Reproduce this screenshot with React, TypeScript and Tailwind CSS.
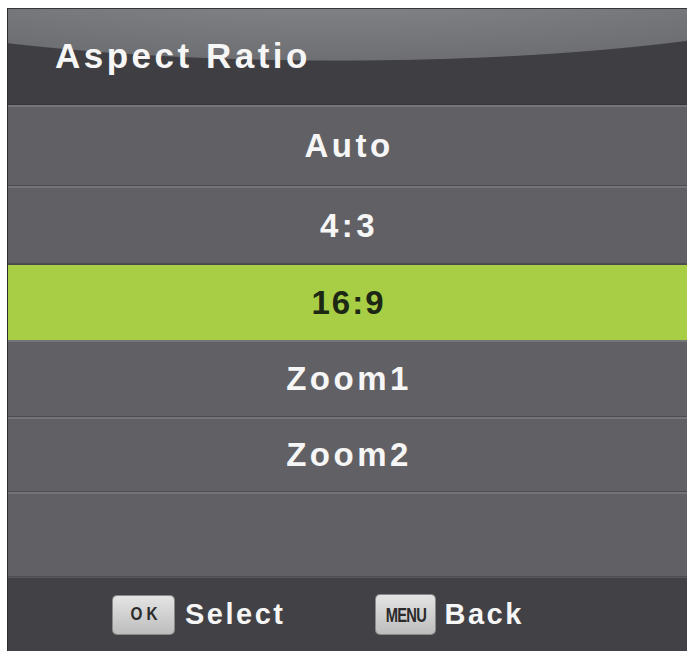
import React from "react";

const rows: { label: string; h: string; selected?: boolean }[] = [
  { label: "Auto", h: "h-[81px]" },
  { label: "4:3", h: "h-[78px]" },
  { label: "16:9", h: "h-[76px]", selected: true },
  { label: "Zoom1", h: "h-[77px]" },
  { label: "Zoom2", h: "h-[75px]" },
  { label: "", h: "h-[85px]" },
];

export default function App() {
  return (
    <div className="w-[693px] h-[651px] bg-white overflow-hidden pt-[8px] pl-[7px] font-['Liberation_Sans',Arial,sans-serif]">
      <div className="w-[680px] flex flex-col border-l border-[#2e2e31]">
        {/* Header */}
        <div className="h-[97px] border-t border-[#2a2a2c] bg-[radial-gradient(ellipse_560px_90px_at_330px_-38px,#838487_30%,#6e6f72_99%,#3f3f43_100%)] pl-[47px] pt-[30px] border-b border-[#36363a]">
          <div className="text-[35px] leading-[34px] font-bold text-[#f6f6f6] tracking-[3.5px]">
            Aspect Ratio
          </div>
        </div>
        {/* Rows */}
        {rows.map((r, i) =>
          r.selected ? (
            <div
              key={i}
              className={`${r.h} flex items-center justify-center bg-[#a7ce45] border-t border-[#4a4a4e]`}
            >
              <span className="text-[33px] font-bold tracking-[2px] text-[#1c2714] pl-[2px]">
                {r.label}
              </span>
            </div>
          ) : (
            <div
              key={i}
              className={`${r.h} flex items-center justify-center bg-[#616165] border-t-2 border-[#757579] border-b border-b-[#4d4d51]`}
            >
              <span className="text-[33px] font-bold tracking-[3.5px] text-[#f6f6f6] pl-[3px]">
                {r.label}
              </span>
            </div>
          )
        )}
        {/* Footer */}
        <div className="h-[74px] bg-[#424246] border-t border-[#58585c] flex items-center pl-[105px]">
          <div className="w-[61px] h-[38px] rounded-[4px] bg-[linear-gradient(#e4e4e4,#bdbdbd)] shadow-[0_0_0_1px_#8a8a8a] flex items-center justify-center">
            <span className="text-[18px] font-bold text-[#2a2a2a] tracking-[5px] pl-[5px] scale-x-[0.85] inline-block">
              OK
            </span>
          </div>
          <span className="ml-[11px] text-[29px] font-bold tracking-[2.5px] text-[#f6f6f6]">
            Select
          </span>
          <div className="ml-[91px] w-[59px] h-[39px] rounded-[4px] bg-[linear-gradient(#e4e4e4,#bdbdbd)] shadow-[0_0_0_1px_#8a8a8a] flex items-center justify-center">
            <span className="text-[21px] font-bold text-[#2a2a2a] tracking-[-1px] scale-x-[0.7] inline-block">
              MENU
            </span>
          </div>
          <span className="ml-[9px] text-[29px] font-bold tracking-[2.5px] text-[#f6f6f6]">
            Back
          </span>
        </div>
      </div>
    </div>
  );
}
